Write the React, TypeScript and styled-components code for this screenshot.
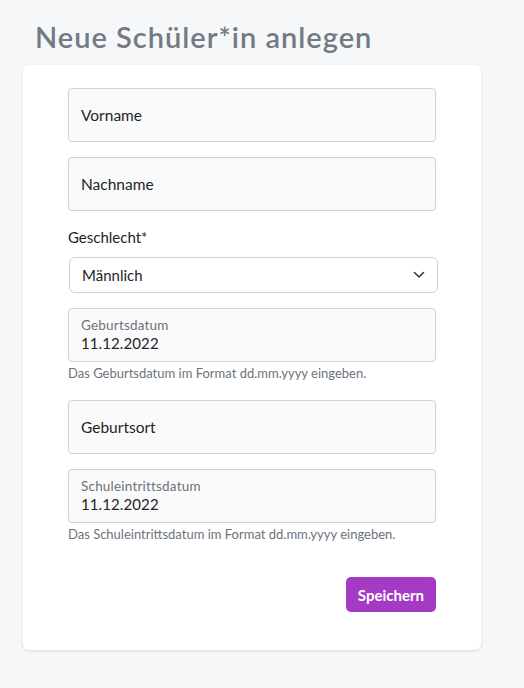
import styled, { createGlobalStyle } from "styled-components";

const GlobalStyle = createGlobalStyle`
    html, body {
        margin: 0;
        padding: 0;
        background: #f6f7f9;
        font-family: Lato, "Noto Sans", sans-serif;
    }
`;

const Page = styled.div`
    padding: 20px 43px 39px 23px;
    width: 458px;
`;

const Title = styled.h1`
    margin: 0 0 11px 12px;
    font-size: 29px;
    font-weight: 600;
    letter-spacing: 1px;
    color: #737a84;
    line-height: 34px;
`;

const Card = styled.form`
    background: #fff;
    border-radius: 6px;
    box-shadow: 0 1px 3px rgba(0, 0, 0, 0.12);
    padding: 23px 45px 38px 45px;
    display: flex;
    flex-direction: column;
`;

const Field = styled.div<{ $gap?: number }>`
    margin-bottom: ${(p) => p.$gap ?? 15}px;
`;

const Box = styled.div`
    border: 1px solid #cdd1d8;
    border-radius: 4px;
    background: #fafafa;
    box-sizing: border-box;
    height: 54px;
    padding: 0 12px;
    display: flex;
    flex-direction: column;
    justify-content: center;
    color: #212529;
`;

const Placeholder = styled.span`
    font-size: 15.5px;
`;

const SmallLabel = styled.span`
    font-size: 13.5px;
    letter-spacing: 0.2px;
    color: #6c737c;
    line-height: 16px;
`;

const Value = styled.span`
    font-size: 15px;
    letter-spacing: 0.1px;
    line-height: 21px;
`;

const Help = styled.div`
    font-size: 13px;
    line-height: 15px;
    color: #6c737c;
    margin-top: 4px;
`;

const Label = styled.div`
    font-size: 15px;
    color: #212529;
    margin: 3px 0 11px;
`;

const Select = styled.div`
    margin-left: 1px;
    margin-right: -2px;
    height: 36px;
    border: 1px solid #cdd1d8;
    border-radius: 6px;
    box-sizing: border-box;
    padding: 0 12px;
    display: flex;
    align-items: center;
    justify-content: space-between;
    font-size: 15px;
    color: #212529;
`;

const Actions = styled.div`
    display: flex;
    justify-content: flex-end;
    margin-top: 35px;
`;

const Button = styled.button`
    background: #a53ac5;
    color: #fff;
    border: none;
    border-radius: 5px;
    height: 35px;
    padding: 0 12px;
    font-family: inherit;
    font-size: 15px;
    font-weight: 700;
`;

const Chevron = () => (
    <svg width="12" height="8" viewBox="0 0 12 8" fill="none">
        <path d="M1.5 1.5 L6 6 L10.5 1.5" stroke="#343a40" strokeWidth="1.6" strokeLinecap="round" strokeLinejoin="round" />
    </svg>
);

export default function App() {
    return (
        <>
            <GlobalStyle />
            <Page>
                <Title>Neue Schüler*in anlegen</Title>
                <Card>
                    <Field>
                        <Box><Placeholder>Vorname</Placeholder></Box>
                    </Field>
                    <Field $gap={14}>
                        <Box><Placeholder>Nachname</Placeholder></Box>
                    </Field>
                    <Label>Geschlecht*</Label>
                    <Field $gap={15}>
                        <Select>
                            <span>Männlich</span>
                            <Chevron />
                        </Select>
                    </Field>
                    <Field $gap={19}>
                        <Box>
                            <SmallLabel>Geburtsdatum</SmallLabel>
                            <Value>11.12.2022</Value>
                        </Box>
                        <Help>Das Geburtsdatum im Format dd.mm.yyyy eingeben.</Help>
                    </Field>
                    <Field>
                        <Box><Placeholder>Geburtsort</Placeholder></Box>
                    </Field>
                    <Field $gap={0}>
                        <Box>
                            <SmallLabel>Schuleintrittsdatum</SmallLabel>
                            <Value>11.12.2022</Value>
                        </Box>
                        <Help>Das Schuleintrittsdatum im Format dd.mm.yyyy eingeben.</Help>
                    </Field>
                    <Actions>
                        <Button type="button">Speichern</Button>
                    </Actions>
                </Card>
            </Page>
        </>
    );
}
